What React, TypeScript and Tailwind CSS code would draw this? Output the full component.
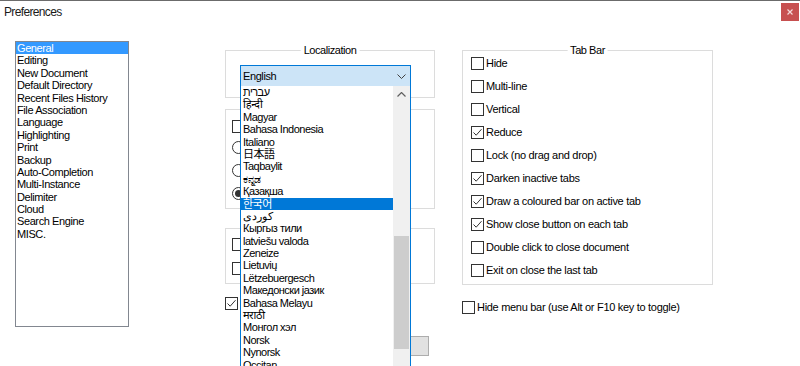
import React from "react";

const FONT = '"Liberation Sans", "Noto Sans", "Noto Sans CJK JP", "Noto Sans CJK KR", sans-serif';

function CheckBox({ checked = false }: { checked?: boolean }) {
  return (
    <div className="w-[13px] h-[13px] shrink-0 border border-[#333333] bg-white flex items-center justify-center">
      {checked && (
        <svg width="11" height="11" viewBox="0 0 11 11">
          <path d="M1.5 5.5 L4.2 8.2 L9.5 2.2" fill="none" stroke="#333333" strokeWidth="1" />
        </svg>
      )}
    </div>
  );
}

function Radio({ checked = false }: { checked?: boolean }) {
  return (
    <div className="w-[13px] h-[13px] shrink-0 rounded-full border border-[#333333] bg-white flex items-center justify-center">
      {checked && <div className="w-[7px] h-[7px] rounded-full bg-[#333333]" />}
    </div>
  );
}

function Group({
  label,
  className,
  children,
}: {
  label?: string;
  className: string;
  children?: React.ReactNode;
}) {
  return (
    <div className={"relative border border-[#dcdcdc] " + className}>
      {label && (
        <div className="absolute top-[-8px] left-1/2 -translate-x-1/2 bg-white px-[3px] text-[11px] leading-[14px] tracking-[-0.45px] text-black whitespace-nowrap">
          {label}
        </div>
      )}
      {children}
    </div>
  );
}

const categories = [
  "General",
  "Editing",
  "New Document",
  "Default Directory",
  "Recent Files History",
  "File Association",
  "Language",
  "Highlighting",
  "Print",
  "Backup",
  "Auto-Completion",
  "Multi-Instance",
  "Delimiter",
  "Cloud",
  "Search Engine",
  "MISC.",
];

const languages = [
  "עברית",
  "हिन्दी",
  "Magyar",
  "Bahasa Indonesia",
  "Italiano",
  "日本語",
  "Taqbaylit",
  "ಕನ್ನಡ",
  "Қазақша",
  "한국어",
  "کوردی",
  "Кыргыз тили",
  "latviešu valoda",
  "Zeneize",
  "Lietuvių",
  "Lëtzebuergesch",
  "Македонски јазик",
  "Bahasa Melayu",
  "मराठी",
  "Монгол хэл",
  "Norsk",
  "Nynorsk",
  "Occitan",
];

const tabOptions: [string, boolean][] = [
  ["Hide", false],
  ["Multi-line", false],
  ["Vertical", false],
  ["Reduce", true],
  ["Lock (no drag and drop)", false],
  ["Darken inactive tabs", true],
  ["Draw a coloured bar on active tab", true],
  ["Show close button on each tab", true],
  ["Double click to close document", false],
  ["Exit on close the last tab", false],
];

export default function App() {
  return (
    <div
      className="w-[800px] h-[366px] bg-white relative overflow-hidden border-t border-[#6b6b6b] text-black"
      style={{ fontFamily: FONT }}
    >
      {/* Title bar */}
      <div className="flex justify-between items-start h-[21px]">
        <div className="pl-[4px] pt-[4px] text-[12px] leading-[15px] tracking-[-0.65px] text-[#1a1a1a]">Preferences</div>
        <div className="mt-[2px] mr-[1px] w-[18px] h-[18px] bg-[#c75050] flex items-center justify-center">
          <svg width="6" height="6" viewBox="0 0 6 6">
            <path d="M0.5 0.5 L5.5 5.5 M5.5 0.5 L0.5 5.5" stroke="#f4dada" strokeWidth="1.2" />
          </svg>
        </div>
      </div>

      {/* Body */}
      <div className="flex items-start pl-[15px]">
        {/* Category list */}
        <div className="mt-[19px] w-[114px] h-[286px] border border-[#828790] bg-white text-[11px] tracking-[-0.4px]">
          {categories.map((c, i) => (
            <div
              key={c}
              className={
                "leading-[12.4px] h-[12.4px] pl-[1px] whitespace-nowrap " +
                (i === 0 ? "bg-[#3399ff] text-white" : "text-black")
              }
            >
              {c}
            </div>
          ))}
        </div>

        {/* Middle column */}
        <div className="ml-[96px] mt-[28px] w-[210px] flex flex-col">
          <Group label="Localization" className="h-[48px] z-10">
            <div className="relative mt-[14px] ml-[14px] w-[171px] h-[22px] border border-[#0078d7] bg-[#cce4f7] flex items-center justify-between">
              <span className="pl-[2px] text-[11px] leading-[14px] tracking-[-0.4px]">English</span>
              <svg width="9" height="5" viewBox="0 0 9 5" className="mr-[4px]">
                <path d="M0.5 0.5 L4.5 4.5 L8.5 0.5" fill="none" stroke="#404040" strokeWidth="1" />
              </svg>
              {/* Dropdown list */}
              <div className="absolute left-[-1px] top-full w-[171px] h-[290px] bg-white border-x border-[#0078d7] flex">
                <div className="flex-1 text-[11px] tracking-[-0.5px] overflow-hidden">
                  {languages.map((l, i) => (
                    <div
                      key={l}
                      className={
                        "h-[12.4px] leading-[12.4px] pl-[2px] whitespace-nowrap text-left " +
                        (i === 9 ? "bg-[#0078d7] text-white" : "text-black")
                      }
                    >
                      {l}
                    </div>
                  ))}
                </div>
                <div className="w-[17px] bg-[#f0f0f0] flex flex-col">
                  <div className="h-[17px] flex items-center justify-center">
                    <svg width="9" height="5" viewBox="0 0 9 5">
                      <path d="M0.5 4.5 L4.5 0.5 L8.5 4.5" fill="none" stroke="#606060" strokeWidth="1.2" />
                    </svg>
                  </div>
                  <div className="h-[133px]" />
                  <div className="h-[113px] mx-[1px] bg-[#cdcdcd]" />
                </div>
              </div>
            </div>
          </Group>

          <Group className="mt-[11px] h-[100px]">
            <div className="pl-[6px] pt-[10px] flex flex-col">
              <CheckBox />
              <div className="mt-[8px] flex flex-col gap-[10px]">
                <Radio />
                <Radio />
                <Radio checked />
              </div>
            </div>
          </Group>

          <Group className="mt-[19px] h-[56px]">
            <div className="pl-[6px] pt-[9px] flex flex-col gap-[11px]">
              <CheckBox />
              <CheckBox />
            </div>
          </Group>

          <div className="mt-[13px] flex items-center">
            <CheckBox checked />
          </div>

          <div className="mt-[26px] flex justify-end pr-[6px]">
            <div className="w-[75px] h-[20px] bg-[#e1e1e1] border border-[#adadad]" />
          </div>
        </div>

        {/* Right column */}
        <div className="ml-[27px] mt-[28px] flex flex-col">
          <Group label="Tab Bar" className="w-[251px] h-[235px]">
            <div className="pt-[6px] pl-[8px] flex flex-col gap-[10px]">
              {tabOptions.map(([t, c]) => (
                <div key={t} className="h-[13px] flex items-center">
                  <CheckBox checked={c} />
                  <span className="ml-[2px] text-[11px] leading-[13px] tracking-[-0.3px] whitespace-nowrap">{t}</span>
                </div>
              ))}
            </div>
          </Group>
          <div className="mt-[16px] h-[13px] flex items-center">
            <CheckBox />
            <span className="ml-[2px] text-[11px] leading-[13px] tracking-[-0.3px] whitespace-nowrap">
              Hide menu bar (use Alt or F10 key to toggle)
            </span>
          </div>
        </div>
      </div>
    </div>
  );
}
